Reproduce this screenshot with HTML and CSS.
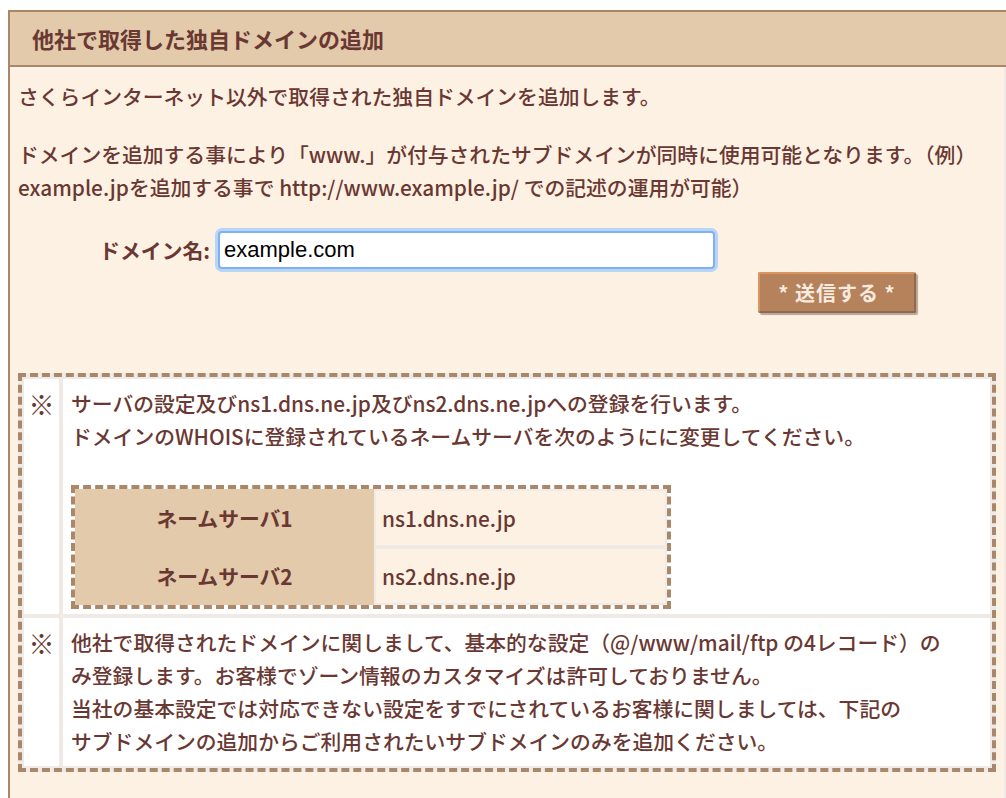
FILE: index.html
```html
<!DOCTYPE html>
<html lang="ja">
<head>
  <meta charset="UTF-8" />
  <title>他社で取得した独自ドメインの追加</title>
  <link rel="stylesheet" href="styles.css">
</head>
<body>

  <div class="panel">
    <h1 class="panel-title">他社で取得した独自ドメインの追加</h1>

    <div class="panel-body">
      <p>さくらインターネット以外で取得された独自ドメインを追加します。</p>
      <p class="lead">ドメインを追加する事により「www.」が付与されたサブドメインが同時に使用可能となります。（例）<br>example.jpを追加する事で http://www.example.jp/ での記述の運用が可能）</p>

      <form class="domain-form" onsubmit="return false;">
        <div class="form-row">
          <label class="form-label" for="domain">ドメイン名:</label>
          <input type="text" id="domain" class="form-input" value="example.com">
        </div>
        <div class="submit-row">
          <button type="submit" class="submit-btn">* 送信する *</button>
        </div>
      </form>

      <table class="notes">
        <tr>
          <td class="mark">※</td>
          <td class="note-text">
            <p class="note-p">サーバの設定及びns1.dns.ne.jp及びns2.dns.ne.jpへの登録を行います。<br>ドメインのWHOISに登録されているネームサーバを次のようにに変更してください。</p>
            <table class="ns-table">
              <tr>
                <th>ネームサーバ1</th>
                <td>ns1.dns.ne.jp</td>
              </tr>
              <tr>
                <th>ネームサーバ2</th>
                <td>ns2.dns.ne.jp</td>
              </tr>
            </table>
          </td>
        </tr>
        <tr>
          <td class="mark">※</td>
          <td class="note-text">他社で取得されたドメインに関しまして、基本的な設定（@/www/mail/ftp の4レコード）の<br>み登録します。お客様でゾーン情報のカスタマイズは許可しておりません。<br>当社の基本設定では対応できない設定をすでにされているお客様に関しましては、下記の<br>サブドメインの追加からご利用されたいサブドメインのみを追加ください。</td>
        </tr>
      </table>
    </div>
  </div>

</body>
</html>
```

FILE: styles.css
```css
* {
  margin: 0;
  padding: 0;
  box-sizing: border-box;
}

html, body {
  overflow: hidden;
}

body {
  margin: 10px 0 0 8px;
  background-color: #ffffff;
  color: #6a3832;
  font-family: "Noto Sans CJK JP", "Noto Sans", sans-serif;
  font-size: 20.8px;
  font-weight: 500;
  line-height: 33px;
}

.panel {
  width: 998px;
  border: 2px solid #a9876b;
  border-right: none;
  border-bottom: none;
}

.panel-title {
  background-color: #e2caab;
  border-bottom: 2px solid #a9876b;
  padding: 10px 22px;
  font-size: 22px;
  line-height: 33px;
  font-weight: bold;
}

.panel-body {
  background-color: #fdf1e4;
  border-right: 2px solid #efeae5;
  padding: 13px 8px 40px;
}

.panel-body p {
  margin-bottom: 25px;
}

.panel-body p.lead {
  margin-bottom: 24px;
}

.form-row {
  display: flex;
  align-items: center;
  height: 44px;
}

.form-label {
  width: 192px;
  text-align: right;
  font-weight: bold;
  margin-right: 8px;
}

.form-input {
  width: 497px;
  height: 38px;
  border: 2px solid #7eb0f2;
  border-radius: 4px;
  box-shadow: 0 0 0 3px #b8d4f7;
  padding: 0 4px;
  outline: none;
  font-family: "Liberation Sans", Arial, sans-serif;
  font-size: 22px;
  color: #000;
  background-color: #fff;
}

.submit-row {
  display: flex;
  justify-content: flex-end;
  padding-right: 80px;
  margin-bottom: 60px;
}

.submit-btn {
  width: 158px;
  height: 41px;
  background-color: #b5825c;
  border-top: 2px solid #d9955f;
  border-left: 2px solid #d9955f;
  border-right: 2px solid #8f6a4f;
  border-bottom: 2px solid #8f6a4f;
  border-radius: 2px;
  box-shadow: 2px 2px 1px #b9a596;
  color: #f7ebe0;
  font-family: "Noto Sans CJK JP", sans-serif;
  font-size: 20px;
  font-weight: bold;
  letter-spacing: 1px;
  cursor: pointer;
}

.notes {
  width: 100%;
  border: 4px dashed #a9876b;
  border-collapse: separate;
  border-spacing: 0;
  background-color: #efeae5;
}

.notes > tbody > tr > td {
  background-color: #ffffff;
  border: 2px solid #efeae5;
  vertical-align: top;
}

.notes .mark {
  width: 39px;
  text-align: center;
  padding-top: 8px;
  font-size: 26px;
  font-weight: bold;
}

.notes .note-text {
  padding: 8px 8px 8px 8px;
}

.notes .note-text .note-p {
  margin-bottom: 32px;
}

.ns-table {
  width: 600px;
  border: 4px dashed #a9876b;
  border-collapse: separate;
  border-spacing: 0;
  margin-bottom: -3px;
}

.ns-table th {
  width: 299px;
  height: 58px;
  background-color: #e2caab;
  font-weight: bold;
  text-align: center;
}

.ns-table td {
  background-color: #fdf1e4;
  border: 2px solid #efeae5;
  padding: 0 6px;
}
```
